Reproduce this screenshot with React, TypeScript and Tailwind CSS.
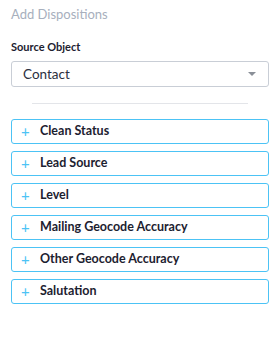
import React from "react";

const items = [
  "Clean Status",
  "Lead Source",
  "Level",
  "Mailing Geocode Accuracy",
  "Other Geocode Accuracy",
  "Salutation",
];

export default function App() {
  return (
    <div
      className="w-[280px] h-[348px] bg-white px-[11px] pt-[5px]"
      style={{ fontFamily: "Lato, 'Noto Sans', sans-serif" }}
    >
      <div className="text-[13px] leading-[18px] text-[#a7afbd]">Add Dispositions</div>
      <div className="mt-[17px] text-[11px] leading-[14px] font-bold text-[#1c2130]">Source Object</div>
      <div className="mt-[7px] h-[26px] rounded-[3px] border border-[#c9ced6] flex items-center pl-[11px] pr-[12px]">
        <span className="flex-1 text-[13.5px] text-[#2b3040]">Contact</span>
        <svg width="8" height="4" viewBox="0 0 8 4">
          <path d="M0 0H8L4 4Z" fill="#8a8f98" />
        </svg>
      </div>
      <div className="mx-[21px] mt-[16px] h-px bg-[#e3e5e9]" />
      <div className="mt-[15px] flex flex-col gap-[7px]">
        {items.map((t) => (
          <div
            key={t}
            className="h-[25px] rounded-[3px] border border-[#4cc3f5] flex items-center pl-[9px]"
          >
            <span className="text-[15px] leading-none text-[#4cc3f5] w-[19px]">+</span>
            <span className="text-[12.5px] font-bold text-[#1c2130]">{t}</span>
          </div>
        ))}
      </div>
    </div>
  );
}
